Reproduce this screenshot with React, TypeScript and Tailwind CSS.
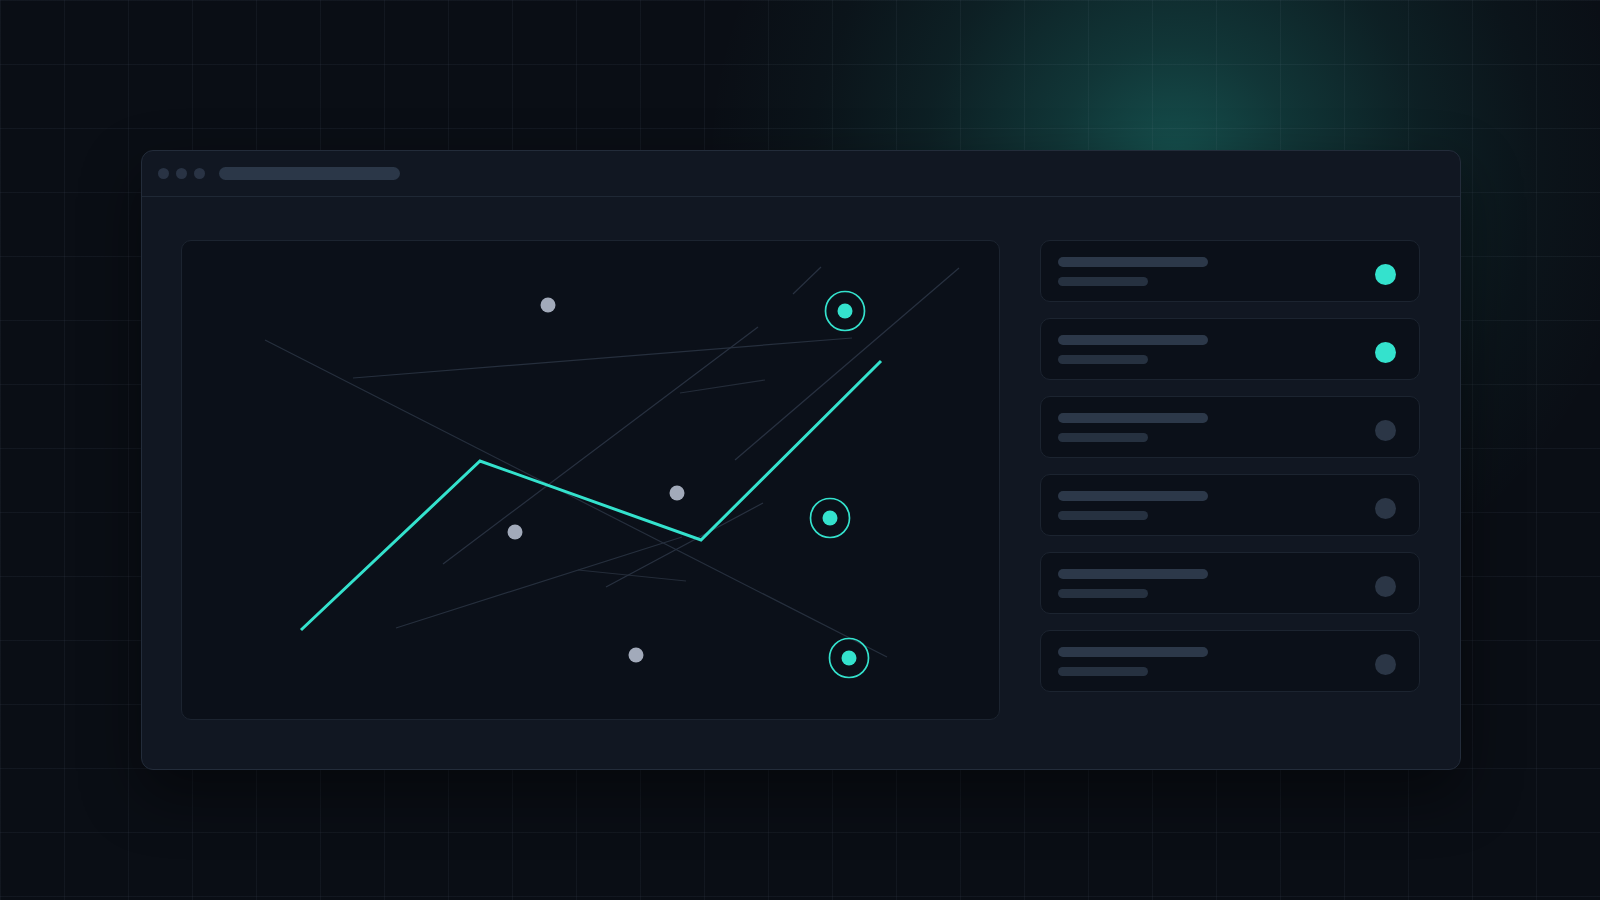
import React from 'react'

const TEAL = '#34e2cd'

// chart drawing uses page coordinates, viewBox starts at the panel's inner corner
const faintLines = [
  { x1: 265, y1: 340, x2: 887, y2: 657, c: '#262f3d' },
  { x1: 353, y1: 378, x2: 852, y2: 338, c: '#262f3d' },
  { x1: 758, y1: 327, x2: 443, y2: 564, c: '#283140' },
  { x1: 959, y1: 268, x2: 735, y2: 460, c: '#283140' },
  { x1: 793, y1: 294, x2: 821, y2: 267, c: '#283140' },
  { x1: 680, y1: 393, x2: 765, y2: 380, c: '#242c39' },
  { x1: 396, y1: 628, x2: 682, y2: 537, c: '#262f3d' },
  { x1: 578, y1: 570, x2: 686, y2: 581, c: '#242c39' },
  { x1: 606, y1: 587, x2: 763, y2: 503, c: '#283140' },
]

const grayDots = [
  [548, 305],
  [515, 532],
  [677, 493],
  [636, 655],
]

const rings = [
  [845, 311],
  [830, 518],
  [849, 658],
]

const rows = [true, true, false, false, false, false]

function Chart() {
  return (
    <div className="relative flex-1 h-[480px] rounded-[10px] border border-[#1c2430] bg-[#0b1019] overflow-hidden">
      <svg className="absolute inset-0 w-full h-full" viewBox="182 241 817 478">
        {faintLines.map((l, i) => (
          <line key={i} x1={l.x1} y1={l.y1} x2={l.x2} y2={l.y2} stroke={l.c} strokeWidth={1.2} />
        ))}
        <polyline
          points="301,630 480,461 701,540 881,361"
          fill="none"
          stroke={TEAL}
          strokeWidth={3}
          strokeLinejoin="miter"
        />
        {grayDots.map(([cx, cy], i) => (
          <circle key={i} cx={cx} cy={cy} r={7.5} fill="#a2aaba" />
        ))}
        {rings.map(([cx, cy], i) => (
          <g key={i}>
            <circle cx={cx} cy={cy} r={19.5} fill="none" stroke={TEAL} strokeWidth={1.7} />
            <circle cx={cx} cy={cy} r={7.5} fill={TEAL} />
          </g>
        ))}
      </svg>
    </div>
  )
}

function Row({ active }: { active: boolean }) {
  return (
    <div className="flex items-center justify-between h-[62px] pl-[17px] pr-[23px] rounded-[10px] border border-[#1c2430] bg-[#0b1019]">
      <div className="flex flex-col gap-[10px]">
        <div className="w-[150px] h-[10px] rounded-full bg-[#2c3849]" />
        <div className="w-[90px] h-[9px] rounded-full bg-[#263140]" />
      </div>
      <div className={`mt-[6px] w-[21px] h-[21px] rounded-full ${active ? 'bg-[#34e2cd]' : 'bg-[#2b3646]'}`} />
    </div>
  )
}

export default function App() {
  return (
    <div className="w-full h-screen overflow-hidden bg-[#0a0e15] pt-[150px] [background-image:linear-gradient(to_right,rgba(148,163,184,0.065)_1px,transparent_1px),linear-gradient(to_bottom,rgba(148,163,184,0.065)_1px,transparent_1px),radial-gradient(circle_at_1175px_165px,rgba(45,212,191,0.34)_0px,rgba(45,212,191,0.2)_120px,rgba(45,212,191,0.09)_250px,rgba(45,212,191,0.03)_360px,transparent_470px)] [background-size:64px_64px,64px_64px,100%_100%]">
      <div className="ml-[141px] w-[1320px] h-[620px] flex flex-col rounded-[12px] border border-[#232c3a] bg-[#111722] shadow-[0_24px_60px_rgba(0,0,0,0.45)]">
        <div className="h-[46px] shrink-0 flex items-center pl-[16px] border-b border-[#1f2835]">
          <div className="flex gap-[7px]">
            <div className="w-[11px] h-[11px] rounded-full bg-[#293344]" />
            <div className="w-[11px] h-[11px] rounded-full bg-[#293344]" />
            <div className="w-[11px] h-[11px] rounded-full bg-[#293344]" />
          </div>
          <div className="ml-[14px] w-[181px] h-[13px] rounded-full bg-[#2b3748]" />
        </div>
        <div className="flex gap-10 pl-[39px] pr-10 pt-[43px]">
          <Chart />
          <div className="w-[380px] flex flex-col gap-4">
            {rows.map((a, i) => (
              <Row key={i} active={a} />
            ))}
          </div>
        </div>
      </div>
    </div>
  )
}
